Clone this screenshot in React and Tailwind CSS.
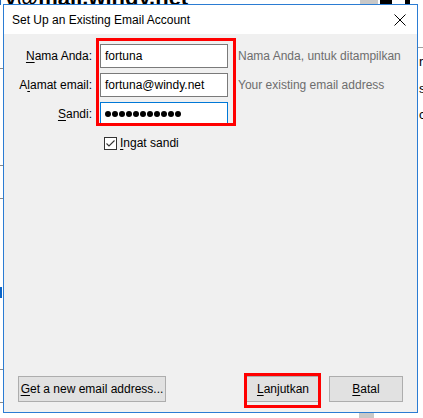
import React from "react";

const font = { fontFamily: '"Liberation Sans", Arial, sans-serif' };

const U = ({ children }) => <span className="underline underline-offset-2">{children}</span>;

const Field = ({ label, value, hint, focused }) => (
  <>
    <div className="text-right text-black leading-[24px] whitespace-nowrap">{label}</div>
    <div
      className={`h-[24px] w-[128px] bg-white border px-[4px] flex items-center text-black ${
        focused ? "border-[#0078d7]" : "border-[#7a7a7a]"
      }`}
    >
      {value}
    </div>
    <div className="pl-[2px] text-[#6d6d6d] leading-[24px] whitespace-nowrap">{hint}</div>
  </>
);

const Button = ({ children, className = "" }) => (
  <div
    className={`h-[26px] flex items-center justify-center bg-[#e1e1e1] border border-[#adadad] text-black whitespace-nowrap ${className}`}
  >
    {children}
  </div>
);

const Dots = ({ count }) => (
  <div className="flex gap-[1px]">
    {Array.from({ length: count }).map((_, i) => (
      <div key={i} className="w-[6px] h-[6px] rounded-full bg-black" />
    ))}
  </div>
);

export default function App() {
  return (
    <div className="relative w-[423px] h-[418px] bg-white overflow-hidden text-[12px]" style={font}>
      {/* background window pieces */}
      <div className="absolute left-[-4px] top-[-19px] text-[22px] font-bold text-black whitespace-nowrap">
        ry@mail.windy.net
      </div>
      <div className="absolute left-[360px] top-0 w-[18px] h-[4px] bg-[#c8c8c8]" />
      <div className="absolute left-[380px] top-0 w-[12px] h-[4px] bg-black" />
      <div className="absolute left-[405px] top-0 w-[5px] h-[4px] bg-black" />
      <div className="absolute left-[418px] top-[47px] w-[5px] h-px bg-[#a0a0a0]" />
      <div className="absolute left-[419px] top-[52px] text-[13px] text-black">ri</div>
      <div className="absolute left-[419px] top-[79px] text-[13px] text-black">se</div>
      <div className="absolute left-[419px] top-[105px] text-[13px] text-black">c</div>
      <div className="absolute left-0 top-[68px] w-[3px] h-px bg-[#8a8a8a]" />
      <div className="absolute left-0 top-[165px] w-[3px] h-px bg-[#8a8a8a]" />
      <div className="absolute left-0 top-[198px] w-[3px] h-px bg-[#8a8a8a]" />
      <div className="absolute left-0 top-[287px] w-[2px] h-[11px] bg-[#0a64c8]" />
      <div className="absolute left-0 top-[369px] w-[3px] h-px bg-[#8a8a8a]" />
      <div className="absolute left-0 top-[402px] w-[3px] h-px bg-[#8a8a8a]" />
      <div className="absolute left-[359px] top-[413px] w-[15px] h-[5px] bg-[#c8c8c8]" />

      {/* dialog window */}
      <div className="absolute left-[3px] top-[4px] w-[415px] h-[409px] border border-[#2b7cd3] bg-[#f0f0f0] flex flex-col">
        <div className="h-[29px] bg-white flex items-center justify-between pl-[8px] pr-[8px] shrink-0">
          <span className="text-black text-[12px]">Set Up an Existing Email Account</span>
          <svg width="12" height="12" viewBox="0 0 12 12" className="mr-[3px]">
            <path d="M0.5 0.5 L11.5 11.5 M11.5 0.5 L0.5 11.5" stroke="#000" strokeWidth="1" />
          </svg>
        </div>

        <div className="relative flex-1 flex flex-col">
          <div className="grid grid-cols-[87px_128px_auto] gap-x-[8px] gap-y-[5px] mt-[10px] ml-[1px]">
            <Field label={<><U>N</U>ama Anda:</>} value="fortuna" hint="Nama Anda, untuk ditampilkan" />
            <Field label={<>A<U>l</U>amat email:</>} value="fortuna@windy.net" hint="Your existing email address" />
            <Field label={<><U>S</U>andi:</>} value={<Dots count={11} />} hint="" focused />
          </div>

          <div className="flex items-center gap-[3px] ml-[100px] mt-[8px]">
            <div className="w-[13px] h-[13px] border border-[#333] bg-white flex items-center justify-center">
              <svg width="11" height="11" viewBox="0 0 11 11">
                <path d="M1.5 5.5 L4 8 L9.5 2.5" stroke="#333" strokeWidth="1.1" fill="none" />
              </svg>
            </div>
            <span className="text-black">
              <U>I</U>ngat sandi
            </span>
          </div>

          <div className="flex-1" />

          <div className="flex items-center px-[14px] pb-[10px]">
            <Button className="w-[148px]">
              <span>
                <U>G</U>et a new email address...
              </span>
            </Button>
            <div className="flex-1" />
            <Button className="w-[74px]">
              <span>
                <U>L</U>anjutkan
              </span>
            </Button>
            <Button className="w-[74px] ml-[9px]">
              <span>
                <U>B</U>atal
              </span>
            </Button>
          </div>

          {/* red annotation boxes */}
          <div className="absolute left-[92px] top-[4px] w-[140px] h-[88px] border-[3px] border-[#ff0000]" />
          <div className="absolute left-[240px] top-[339px] w-[77px] h-[35px] border-[3px] border-[#ff0000]" />
        </div>
      </div>
    </div>
  );
}
